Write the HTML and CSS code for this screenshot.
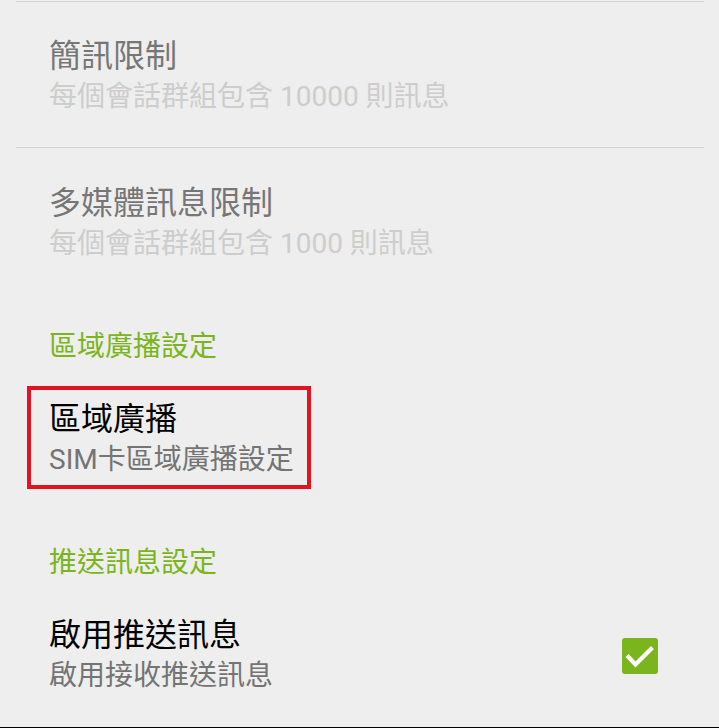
FILE: index.html
```html
<!doctype html>
<html lang="zh-Hant">
  <head>
    <meta charset="utf-8">
    <title>訊息設定</title>
    <link rel="stylesheet" href="styles.css">
  </head>
  <body>
    <div class="prefs">
      <div class="divider first"></div>
      <div class="pref pref-top">
        <div class="pref-text disabled">
          <div class="pref-title">簡訊限制</div>
          <div class="pref-summary">每個會話群組包含 10000 則訊息</div>
        </div>
      </div>
      <div class="divider"></div>
      <div class="pref">
        <div class="pref-text disabled">
          <div class="pref-title">多媒體訊息限制</div>
          <div class="pref-summary">每個會話群組包含 1000 則訊息</div>
        </div>
      </div>

      <div class="category">區域廣播設定</div>
      <div class="pref pref-marked">
        <div class="pref-text highlight">
          <div class="pref-title">區域廣播</div>
          <div class="pref-summary">SIM卡區域廣播設定</div>
        </div>
      </div>

      <div class="category">推送訊息設定</div>
      <div class="pref pref-last">
        <div class="pref-text">
          <div class="pref-title">啟用推送訊息</div>
          <div class="pref-summary">啟用接收推送訊息</div>
        </div>
        <div class="checkbox checked">
          <svg width="36" height="36" viewBox="0 0 36 36">
            <polyline points="6.5,19 13.5,26.5 29,11" fill="none" stroke="#fff" stroke-width="4.2" stroke-linecap="square"/>
          </svg>
        </div>
      </div>
    </div>
    <div class="navbar"></div>
  </body>
</html>
```

FILE: styles.css
```css
html, body {
  height: 728px;
  overflow: hidden;
}
body {
  margin: 0;
  background: #eeeeee;
  font-family: Roboto, "Noto Sans CJK TC", sans-serif;
}
.divider {
  height: 1px;
  margin: 0 15px 0 16px;
  background: #d2d2d2;
}
.divider.first {
  margin-top: 1px;
}
.pref {
  display: flex;
  align-items: center;
  padding: 35px 61px 29px 49px;
}
.pref-top {
  padding-top: 34px;
}
.pref-text {
  flex: 1;
}
.pref-title {
  font-size: 32px;
  line-height: 40px;
  color: #000;
}
.pref-summary {
  font-size: 28px;
  line-height: 42px;
  color: #747474;
}
.disabled .pref-title {
  color: #767676;
}
.disabled .pref-summary {
  color: #cdcdcd;
}
.category {
  padding: 33px 0 0 49px;
  font-size: 28px;
  line-height: 40px;
  color: #7ab51d;
}
.pref-marked {
  padding-top: 19px;
  padding-bottom: 21px;
}
.highlight {
  flex: none;
  box-sizing: border-box;
  width: 284px;
  margin-left: -22px;
  padding: 9px 0 4px 18px;
  border: 4px solid #e2141f;
}
.pref-last {
  padding-top: 32px;
  padding-bottom: 30px;
}
.checkbox {
  width: 36px;
  height: 36px;
  border-radius: 3px;
  background: #7ab51d;
}
.checkbox svg {
  display: block;
}
.navbar {
  height: 4px;
  background: #000;
}
```
